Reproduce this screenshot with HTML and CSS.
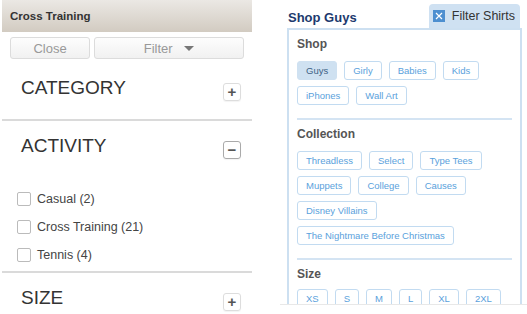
FILE: index.html
```html
<!DOCTYPE html>
<html lang="en">
<head>
    <meta charset="UTF-8">
    <title>Filters</title>
    <link rel="stylesheet" href="styles.css">
</head>
<body>
    <div class="page">
        <div class="panel">
            <div class="bar">Cross Training</div>
            <div class="actions">
                <button class="btn btn-close">Close</button>
                <button class="btn btn-filter">Filter <span class="caret"></span></button>
            </div>

            <div class="group">
                <div class="group-head">
                    <span>CATEGORY</span>
                    <span class="toggle">+</span>
                </div>
            </div>

            <div class="group">
                <div class="group-head">
                    <span>ACTIVITY</span>
                    <span class="toggle toggle-open">&minus;</span>
                </div>
                <ul class="checks">
                    <li><span class="box"></span>Casual (2)</li>
                    <li><span class="box"></span>Cross Training (21)</li>
                    <li><span class="box"></span>Tennis (4)</li>
                </ul>
            </div>

            <div class="group">
                <div class="group-head">
                    <span>SIZE</span>
                    <span class="toggle">+</span>
                </div>
            </div>
        </div>

        <div class="shop">
            <div class="shop-head">
                <h2>Shop Guys</h2>
                <div class="tab">
                    <svg width="12" height="12" viewBox="0 0 12 12">
                        <rect width="12" height="12" fill="#4d8fd0"/>
                        <path d="M3 3 L9 9 M9 3 L3 9" stroke="#fff" stroke-width="1.2"/>
                    </svg>
                    Filter Shirts
                </div>
            </div>
            <div class="shop-box">
                <div class="section">
                    <h3>Shop</h3>
                    <div class="tags">
                        <span class="tag tag-on">Guys</span>
                        <span class="tag">Girly</span>
                        <span class="tag">Babies</span>
                        <span class="tag">Kids</span>
                        <span class="tag">iPhones</span>
                        <span class="tag">Wall Art</span>
                    </div>
                </div>
                <div class="section">
                    <h3>Collection</h3>
                    <div class="tags">
                        <span class="tag">Threadless</span>
                        <span class="tag">Select</span>
                        <span class="tag">Type Tees</span>
                        <span class="tag">Muppets</span>
                        <span class="tag">College</span>
                        <span class="tag">Causes</span>
                        <span class="tag">Disney Villains</span>
                        <span class="tag">The Nightmare Before Christmas</span>
                    </div>
                </div>
                <div class="section">
                    <h3>Size</h3>
                    <div class="tags">
                        <span class="tag">XS</span>
                        <span class="tag">S</span>
                        <span class="tag">M</span>
                        <span class="tag">L</span>
                        <span class="tag">XL</span>
                        <span class="tag">2XL</span>
                    </div>
                </div>
            </div>
        </div>
    </div>
</body>
</html>
```

FILE: styles.css
```css
body {
    margin: 0;
    background: white;
    font-family: "Liberation Sans", Arial, sans-serif;
    color: #333;
}
.page {
    display: flex;
    align-items: flex-start;
    height: 314px;
    overflow: hidden;
}

/* left filter panel */
.panel {
    width: 250px;
    margin-left: 2px;
}
.bar {
    height: 31px;
    padding: 1px 8px 0;
    line-height: 31px;
    font-size: 11.5px;
    font-weight: bold;
    color: #333;
    background: linear-gradient(#ebe8e4, #d2cbc1);
}
.actions {
    display: flex;
    gap: 4px;
    padding: 5px 8px 0;
    margin-bottom: 4px;
}
.btn {
    height: 22px;
    padding: 0;
    border: 1px solid #dcdcdc;
    border-radius: 3px;
    background: linear-gradient(#fdfdfd, #f1f1f1);
    font-family: inherit;
    font-size: 13px;
    color: #999;
}
.btn-close {
    width: 80px;
}
.btn-filter {
    width: 150px;
}
.caret {
    display: inline-block;
    width: 0;
    height: 0;
    margin-left: 8px;
    vertical-align: 2px;
    border-left: 5px solid transparent;
    border-right: 5px solid transparent;
    border-top: 5px solid #777;
}
.group {
    border-bottom: 2px solid #dadada;
}
.group:last-child {
    border-bottom: none;
}
.group-head {
    display: flex;
    justify-content: space-between;
    align-items: flex-start;
    height: 42px;
    padding: 14px 11px 0 19px;
    font-size: 19px;
    line-height: 22px;
    color: #333;
}
.toggle {
    width: 16px;
    height: 16px;
    margin-top: 6px;
    border: 1px solid #ddd;
    border-radius: 3px;
    font-size: 15px;
    line-height: 15px;
    font-weight: bold;
    text-align: center;
    color: #555;
    box-shadow: 0 1px 1px rgba(0, 0, 0, 0.05);
}
.toggle-open {
    border-color: #aaa;
}
.checks {
    list-style: none;
    margin: 0;
    padding: 8px 0 2px 15px;
}
.checks li {
    display: flex;
    align-items: center;
    height: 28px;
    font-size: 12.5px;
    color: #444;
}
.box {
    width: 12px;
    height: 12px;
    margin-right: 6px;
    border: 1px solid #bbb;
    border-radius: 2px;
}

/* right shop panel */
.shop {
    width: 235px;
    height: 304px;
    margin-left: 28px;
    padding: 0 5px 0 7px;
    overflow: hidden;
    border-bottom: 1px solid #e8e8e8;
}
.shop-head {
    display: flex;
    justify-content: space-between;
    align-items: flex-end;
    height: 28px;
    padding: 0 2px 0 1px;
}
.shop-head h2 {
    margin: 0 0 2px;
    font-size: 13px;
    line-height: 16px;
    color: #1d3a6e;
}
.tab {
    display: flex;
    align-items: center;
    gap: 7px;
    height: 24px;
    padding: 0 5px 0 4px;
    border-radius: 4px 4px 0 0;
    background: #cfe1f2;
    font-size: 12.5px;
    color: #333;
}
.shop-box {
    border: 2px solid #cde0f1;
    border-bottom: none;
    padding: 0 8px;
}
.section {
    padding: 6px 0 13px;
    border-bottom: 2px solid #d4e4f3;
}
.section:last-child {
    border-bottom: none;
}
.section h3 {
    margin: 0 0 9px;
    font-size: 12px;
    line-height: 16px;
    color: #555;
}
.section:last-child h3 {
    margin-bottom: 7px;
}
.tags {
    display: flex;
    flex-wrap: wrap;
    gap: 6px 7px;
}
.tag {
    height: 17px;
    padding: 0 8px;
    border: 1px solid #c2dbf1;
    border-radius: 3px;
    font-size: 9.5px;
    line-height: 17px;
    color: #5aa1dc;
}
.tag-on {
    background: #cfe1f1;
    border-color: #cfe1f1;
    color: #3d5f84;
}
```
